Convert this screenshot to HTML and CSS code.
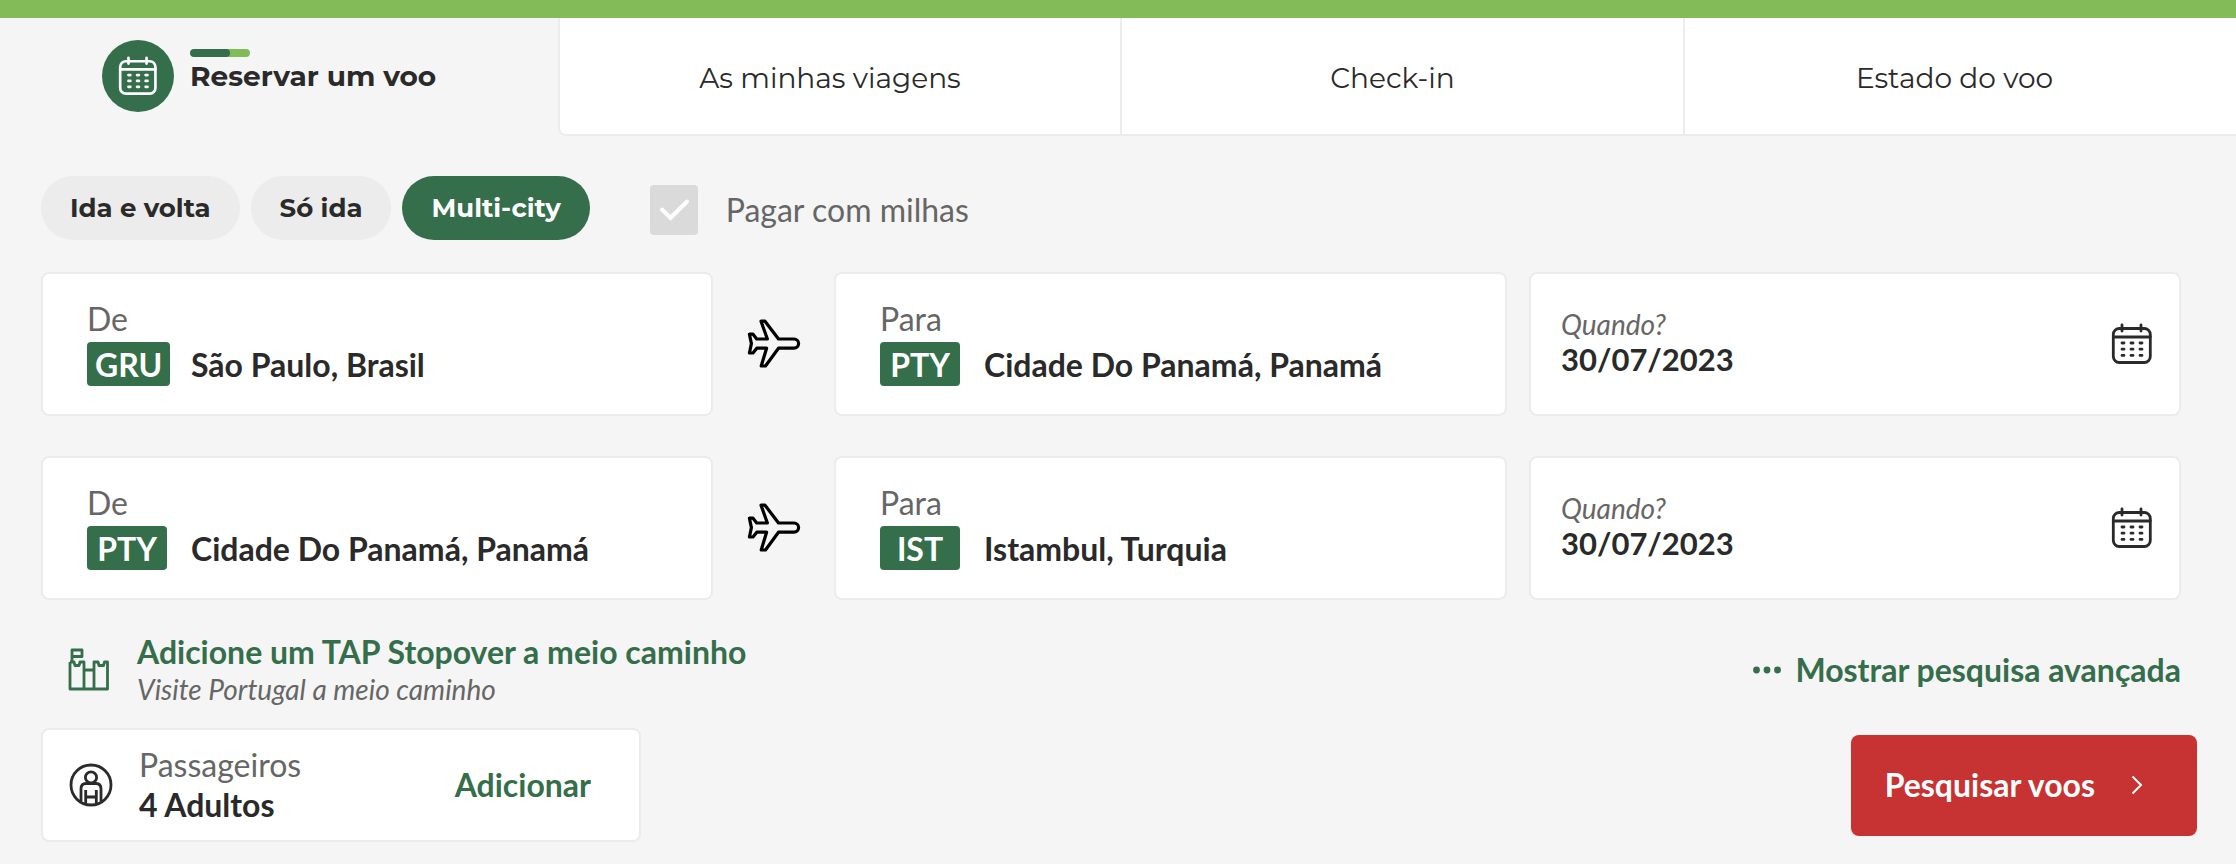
FILE: index.html
```html
<!DOCTYPE html>
<html lang="pt">
<head>
    <meta charset="UTF-8">
    <meta name="viewport" content="width=device-width, initial-scale=1.0">
    <title>Reservar um voo</title>
    <link rel="stylesheet" href="styles.css">
</head>
<body>
    <!-- Shared icons -->
    <svg class="icon-defs" aria-hidden="true">
        <symbol id="icon-calendar" viewBox="0 0 42 42">
            <g fill="none" stroke="currentColor" stroke-width="2.8" stroke-linecap="round">
                <rect x="2.3" y="5.5" width="37" height="34" rx="6"/>
                <path d="M2.3 14H39.3M11 1.8V8M30 1.8V8"/>
                <path d="M11 20h2M20 20h2M29 20h2M11 26.2h2M20 26.2h2M29 26.2h2M11 32.4h2M20 32.4h2M29 32.4h2"/>
            </g>
        </symbol>
        <symbol id="icon-plane" viewBox="0 0 54 50">
            <path fill="none" stroke="currentColor" stroke-width="3.2" stroke-linejoin="round" d="M14 2.2H18L31.5 20H47a4.6 4.6 0 0 1 0 9.2H31.5L18.5 47H14.2L19.6 29.2H9.7L6 34H2.4L4.4 24.6L2.4 15.2H6L9.7 20H20.4Z"/>
        </symbol>
    </svg>

    <div class="top-bar"></div>

    <nav class="tabs">
        <a href="#" class="tab tab-active">
            <span class="tab-icon"><svg><use href="#icon-calendar"/></svg></span>
            <span class="tab-title">
                <span class="tab-progress"><span class="tab-progress-fill"></span></span>
                <span>Reservar um voo</span>
            </span>
        </a>
        <a href="#" class="tab">As minhas viagens</a>
        <a href="#" class="tab">Check-in</a>
        <a href="#" class="tab">Estado do voo</a>
    </nav>

    <form class="booking">
        <div class="trip-options">
            <div class="trip-types">
                <button type="button" class="pill">Ida e volta</button>
                <button type="button" class="pill">Só ida</button>
                <button type="button" class="pill pill-active">Multi-city</button>
            </div>
            <div class="miles">
                <span class="checkbox">
                    <input type="checkbox" id="miles">
                    <svg viewBox="0 0 48 50"><path d="M12 24.5L20.5 33L37 16.5"/></svg>
                </span>
                <label for="miles">Pagar com milhas</label>
            </div>
        </div>

        <div class="flights">
            <div class="flight">
                <button type="button" class="card place">
                    <span class="place-label">De</span>
                    <span class="place-value"><span class="code">GRU</span><span>São Paulo, Brasil</span></span>
                </button>
                <svg class="plane"><use href="#icon-plane"/></svg>
                <button type="button" class="card place">
                    <span class="place-label">Para</span>
                    <span class="place-value"><span class="code">PTY</span><span>Cidade Do Panamá, Panamá</span></span>
                </button>
                <div class="card date">
                    <div class="date-field">
                        <label for="date-1">Quando?</label>
                        <input type="text" id="date-1" value="30/07/2023">
                    </div>
                    <svg class="calendar"><use href="#icon-calendar"/></svg>
                </div>
            </div>

            <div class="flight">
                <button type="button" class="card place">
                    <span class="place-label">De</span>
                    <span class="place-value"><span class="code">PTY</span><span>Cidade Do Panamá, Panamá</span></span>
                </button>
                <svg class="plane"><use href="#icon-plane"/></svg>
                <button type="button" class="card place">
                    <span class="place-label">Para</span>
                    <span class="place-value"><span class="code">IST</span><span>Istambul, Turquia</span></span>
                </button>
                <div class="card date">
                    <div class="date-field">
                        <label for="date-2">Quando?</label>
                        <input type="text" id="date-2" value="30/07/2023">
                    </div>
                    <svg class="calendar"><use href="#icon-calendar"/></svg>
                </div>
            </div>
        </div>

        <div class="extras">
            <a href="#" class="stopover">
                <svg class="castle" viewBox="0 0 42 44">
                    <path d="M4 14V2H14V8.5H4M2 14H6L7 17.5H11L12 14H16V41M26 41V14H30L31 17.5H35.5L36.5 14H39.5V41H2V14M16 22H26"/>
                </svg>
                <span class="stopover-text">
                    <span class="stopover-title">Adicione um TAP Stopover a meio caminho</span>
                    <span class="stopover-sub">Visite Portugal a meio caminho</span>
                </span>
            </a>
            <a href="#" class="advanced">
                <svg class="dots" viewBox="0 0 28 8"><circle cx="3.5" cy="4" r="3.4"/><circle cx="14" cy="4" r="3.4"/><circle cx="24.5" cy="4" r="3.4"/></svg>
                <span>Mostrar pesquisa avançada</span>
            </a>
        </div>

        <div class="actions">
            <div class="card passengers">
                <svg class="person" viewBox="0 0 44 44">
                    <circle cx="22" cy="22" r="20"/>
                    <circle cx="22" cy="14.4" r="5.6"/>
                    <path d="M12 38.5V26Q12 20.5 17 20.5H27Q32 20.5 32 26V38.5M16.7 27V40.5M27.3 27V40.5M16.7 34H27.3"/>
                </svg>
                <div class="passengers-text">
                    <span class="passengers-label">Passageiros</span>
                    <span class="passengers-value">4 Adultos</span>
                </div>
                <button type="button" class="add">Adicionar</button>
            </div>
            <button type="submit" class="search">
                <span>Pesquisar voos</span>
                <svg class="chevron" viewBox="0 0 12 20"><path d="M1.5 1.5L10 10L1.5 18.5"/></svg>
            </button>
        </div>
    </form>
</body>
</html>
```
FILE: styles.css
```css
* {
    margin: 0;
    padding: 0;
    box-sizing: border-box;
}

body {
    font-family: Lato, sans-serif;
    font-size: 32px;
    line-height: 40px;
    background: #f5f5f5;
    color: #2a2a2a;
}

a {
    color: inherit;
    text-decoration: none;
}

button,
input {
    font: inherit;
    color: inherit;
    background: none;
    border: none;
}

button {
    cursor: pointer;
}

svg {
    display: block;
    flex-shrink: 0;
}

.icon-defs {
    display: none;
}

.top-bar {
    height: 18px;
    background: #84bb59;
}

/* Tabs */
.tabs {
    display: grid;
    grid-template-columns: 558fr 562fr 563fr 553fr;
    height: 118px;
    font-family: Montserrat, Inter, sans-serif;
    font-size: 28px;
}

.tab {
    display: flex;
    align-items: center;
    justify-content: center;
    padding: 4px 20px 0 0;
    background: #fff;
    border-left: 2px solid #ececec;
    border-bottom: 2px solid #ececec;
}

.tab:nth-child(2) {
    border-bottom-left-radius: 8px;
}

.tab:last-child {
    padding-right: 12px;
}

.tab-active {
    justify-content: flex-start;
    align-items: flex-start;
    gap: 16px;
    padding: 22px 0 0 102px;
    background: none;
    border: none;
    font-weight: 700;
    line-height: 38px;
}

.tab-icon {
    display: flex;
    align-items: center;
    justify-content: center;
    width: 72px;
    height: 72px;
    border-radius: 50%;
    background: #346e4a;
    color: #fff;
}

.tab-icon svg {
    width: 40px;
    height: 40px;
}

.tab-title {
    display: flex;
    flex-direction: column;
    padding-top: 9px;
}

.tab-progress {
    width: 60px;
    height: 8px;
    border-radius: 4px;
    background: #84bb59;
    overflow: hidden;
}

.tab-progress-fill {
    display: block;
    width: 40px;
    height: 8px;
    border-radius: 4px;
    background: #346e4a;
}

/* Trip type */
.booking {
    padding: 40px 55px 22px 41px;
}

.trip-options {
    display: flex;
    align-items: center;
    gap: 60px;
}

.trip-types {
    display: flex;
    gap: 11px;
}

.pill {
    height: 64px;
    padding: 0 29px;
    border-radius: 32px;
    background: #ececec;
    font-family: Montserrat, Inter, sans-serif;
    font-size: 26px;
    font-weight: 700;
}

.pill-active {
    background: #346e4a;
    color: #fff;
}

.miles {
    display: flex;
    align-items: center;
    gap: 28px;
    padding-top: 4px;
    color: #666;
}

.checkbox {
    display: grid;
    width: 48px;
    height: 50px;
}

.checkbox input,
.checkbox svg {
    grid-area: 1 / 1;
    width: 100%;
    height: 100%;
}

.checkbox input {
    appearance: none;
    border-radius: 4px;
    background: #dadada;
}

.checkbox svg {
    pointer-events: none;
    fill: none;
    stroke: #fff;
    stroke-width: 4;
    stroke-linecap: round;
}

/* Flights */
.card {
    background: #fff;
    border: 2px solid #ececec;
    border-radius: 8px;
}

.flights {
    display: flex;
    flex-direction: column;
    gap: 40px;
    padding-top: 32px;
}

.flight {
    display: grid;
    grid-template-columns: 672fr 121px 673fr 22px 652fr;
    align-items: center;
    height: 144px;
}

.flight .card {
    height: 100%;
}

.place {
    display: flex;
    flex-direction: column;
    justify-content: center;
    gap: 3px;
    padding: 0 44px 3px;
    text-align: left;
}

.place-label,
.passengers-label {
    color: #666;
}

.place-value {
    display: grid;
    grid-template-columns: 80px 1fr;
    align-items: baseline;
    gap: 24px;
    font-weight: 700;
}

.code {
    width: max-content;
    min-width: 80px;
    padding: 3px 8px 1px;
    border-radius: 4px;
    background: #346e4a;
    color: #fff;
    text-align: center;
}

.plane {
    justify-self: center;
    width: 54px;
    height: 50px;
    color: #000;
}

.date {
    grid-column: 5;
    display: flex;
    align-items: center;
    justify-content: space-between;
    padding: 0 26px 0 30px;
}

.date-field {
    display: flex;
    flex-direction: column;
    padding-bottom: 2px;
}

.date-field label {
    font-size: 28px;
    font-style: italic;
    line-height: 32px;
    color: #666;
}

.date-field input {
    width: 240px;
    height: 38px;
    font-size: 31px;
    font-weight: 700;
}

.calendar {
    width: 42px;
    height: 42px;
}

/* Stopover and advanced search */
.extras {
    display: flex;
    align-items: center;
    justify-content: space-between;
    padding: 32px 0 20px 27px;
    color: #346e4a;
    font-weight: 700;
}

.stopover {
    display: flex;
    align-items: center;
    gap: 27px;
}

.stopover-text,
.passengers-text {
    display: flex;
    flex-direction: column;
}

.stopover-sub {
    padding-bottom: 2px;
    font-size: 28px;
    font-style: italic;
    font-weight: 400;
    line-height: 34px;
    color: #666;
}

.castle,
.person,
.chevron {
    fill: none;
    stroke: currentColor;
    stroke-width: 2.8;
}

.castle {
    width: 42px;
    height: 44px;
    stroke-linejoin: round;
}

.advanced {
    display: flex;
    align-items: center;
    gap: 14px;
}

.dots {
    width: 28px;
    height: 8px;
    fill: currentColor;
}

/* Passengers and search */
.actions {
    display: flex;
    align-items: center;
    justify-content: space-between;
    margin-right: -16px;
}

.passengers {
    display: flex;
    align-items: center;
    gap: 26px;
    width: 600px;
    height: 114px;
    padding: 0 48px 0 26px;
}

.person {
    width: 44px;
    height: 44px;
}

.passengers-value {
    font-weight: 700;
}

.add {
    margin-left: auto;
    color: #346e4a;
    font-weight: 700;
}

.search {
    display: flex;
    align-items: center;
    gap: 36px;
    height: 101px;
    padding: 0 54px 0 34px;
    border-radius: 8px;
    background: #c73333;
    color: #fff;
    font-weight: 700;
}

.chevron {
    width: 12px;
    height: 20px;
    stroke-width: 2;
}
```
